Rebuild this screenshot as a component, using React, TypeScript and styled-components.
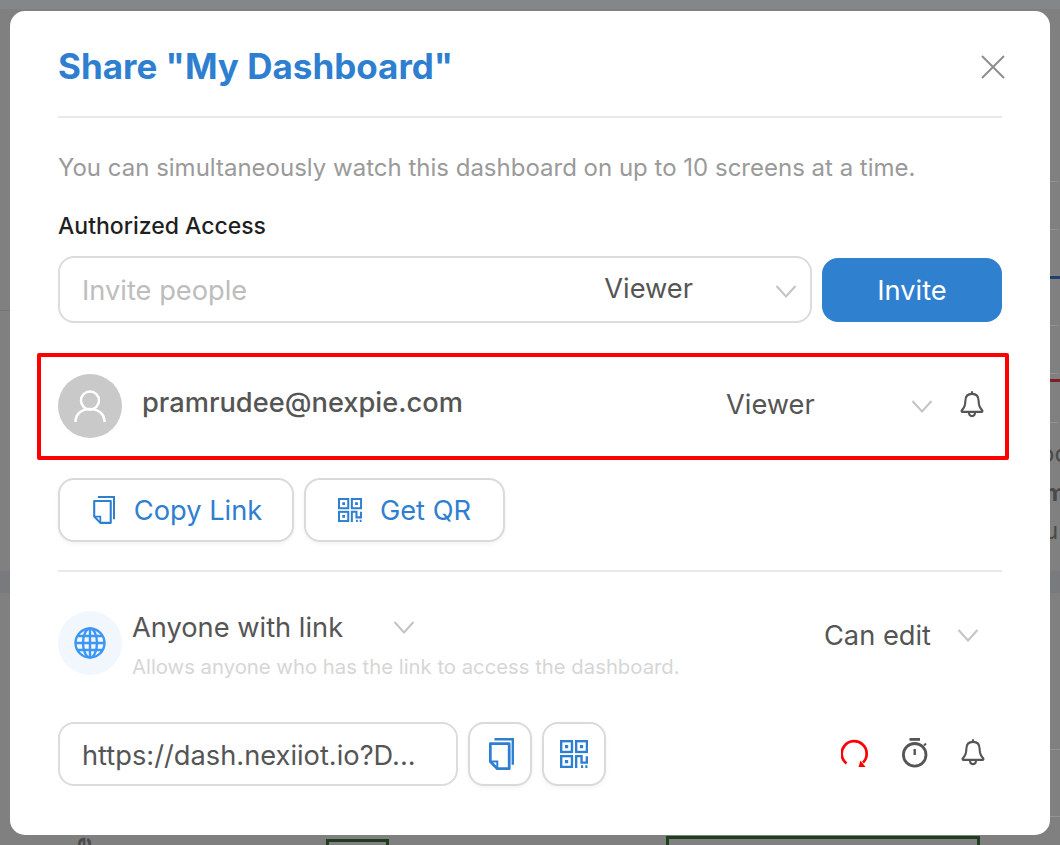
import styled, { createGlobalStyle } from 'styled-components';

const GlobalStyle = createGlobalStyle`
  html, body {
    margin: 0;
    padding: 0;
    height: 845px;
    overflow: hidden;
    background: #808080;
  }
  * {
    box-sizing: border-box;
  }
`;

const Page = styled.div`
  position: relative;
  width: 1060px;
  height: 845px;
  padding: 11px 10px 10px;
  background: #808080;
  overflow: hidden;
  font-family: Inter, "Liberation Sans", sans-serif;
`;

// bits of the dashboard that show around the dimmed modal
const BackMark = styled.div<{ $x: number; $y: number; $w: number; $h: number; $c: string }>`
  position: absolute;
  left: ${(p) => p.$x}px;
  top: ${(p) => p.$y}px;
  width: ${(p) => p.$w}px;
  height: ${(p) => p.$h}px;
  background: ${(p) => p.$c};
`;

const BackText = styled.span<{ $x: number; $y: number; $bold?: boolean }>`
  position: absolute;
  left: ${(p) => p.$x}px;
  top: ${(p) => p.$y}px;
  font-size: 24px;
  line-height: 28px;
  font-weight: ${(p) => (p.$bold ? 700 : 400)};
  color: #4a4a4a;
`;

const RotatedText = styled(BackText)`
  transform: rotate(-90deg);
`;

const GreenBox = styled.div<{ $x: number; $y: number; $w: number }>`
  position: absolute;
  left: ${(p) => p.$x}px;
  top: ${(p) => p.$y}px;
  width: ${(p) => p.$w}px;
  height: 30px;
  border: 3px solid #1f3d1f;
`;

const Modal = styled.div`
  position: relative;
  width: 1040px;
  height: 824px;
  padding: 0 48px;
  background: #fff;
  border-radius: 15px;
`;

const Header = styled.div`
  display: flex;
  align-items: center;
  justify-content: space-between;
  height: 107px;
  padding-top: 5px;
  border-bottom: 2px solid #e9e9e9;
`;

const Title = styled.h1`
  margin: 0;
  font-size: 35px;
  font-weight: 700;
  color: #2f7fd1;
`;

const CloseButton = styled.div`
  display: flex;
  margin-right: -3px;
  margin-top: 2px;
  color: #8e8e8e;
`;

const Hint = styled.p`
  margin: 36px 0 0;
  font-size: 24px;
  line-height: 28px;
  color: #9a9a9a;
`;

const Label = styled.div`
  margin-top: 30px;
  font-size: 23px;
  line-height: 28px;
  font-weight: 500;
  color: #1f1f1f;
`;

const InviteRow = styled.div`
  display: flex;
  gap: 10px;
  align-items: center;
  margin-top: 16px;
`;

const InviteField = styled.div`
  display: flex;
  align-items: center;
  flex: 0 0 754px;
  height: 67px;
  padding: 2px 13px 0 22px;
  border: 2px solid #dcdcdc;
  border-radius: 16px;
`;

const Placeholder = styled.span`
  flex: 1;
  font-size: 27.25px;
  color: #bdbdbd;
`;

const RoleText = styled.span`
  font-size: 27.25px;
  color: #555;
`;

const InviteRole = styled(RoleText)`
  margin: -4px 82px 0 0;
`;

const InviteButton = styled.button`
  flex: 1;
  height: 64px;
  padding: 2px 0 0;
  border: none;
  border-radius: 16px;
  background: #3080d0;
  color: #fff;
  font-family: inherit;
  font-size: 27.25px;
`;

const Caret = styled.svg`
  display: block;
  flex: none;
  width: 22px;
  height: 14px;
  fill: none;
  stroke: #c4c4c4;
  stroke-width: 2;
`;

const MemberRow = styled.div`
  display: flex;
  align-items: center;
  height: 107px;
  margin: 30px -7px 0 -21px;
  padding: 0 21px 2px 17px;
  border: 4px solid #ff0000;
  border-radius: 2px;
`;

const Avatar = styled.div`
  display: flex;
  align-items: center;
  justify-content: center;
  flex: none;
  width: 64px;
  height: 64px;
  border-radius: 50%;
  background: #c9c9c9;
  color: #fff;
`;

const MemberEmail = styled.span`
  width: 584px;
  margin: -7px 0 0 20px;
  font-size: 27.25px;
  font-weight: 500;
  color: #555;
`;

const MemberRole = styled(RoleText)`
  width: 185px;
  margin-top: -3px;
`;

const MemberCaret = styled.div`
  display: flex;
  flex: none;
  width: 49px;
`;

const MemberBell = styled.div`
  display: flex;
  margin-top: -3px;
`;

const LinkButtons = styled.div`
  display: flex;
  gap: 10px;
  margin-top: 18px;
`;

const OutlineButton = styled.button<{ $width: number; $gap: number; $inset?: number }>`
  display: flex;
  align-items: center;
  justify-content: center;
  gap: ${(p) => p.$gap}px;
  width: ${(p) => p.$width}px;
  height: 64px;
  padding: 0 0 0 ${(p) => p.$inset ?? 0}px;
  background: #fff;
  border: 2px solid #dadada;
  border-radius: 16px;
  box-shadow: 0 2px 4px rgba(0, 0, 0, 0.05);
  color: #2f7fd1;
  font-family: inherit;
  font-size: 27.25px;
`;

const Divider = styled.div`
  height: 2px;
  margin-top: 28px;
  background: #e9e9e9;
`;

const PublicRow = styled.div`
  display: flex;
  align-items: flex-start;
  margin-top: 39px;
`;

const GlobeCircle = styled.div`
  display: flex;
  align-items: center;
  justify-content: center;
  flex: none;
  width: 64px;
  height: 64px;
  border-radius: 50%;
  background: #f1f7fd;
`;

const PublicInfo = styled.div`
  flex: 1;
  margin-left: 10px;
`;

const PublicTitle = styled.div`
  display: flex;
  align-items: center;
  gap: 50px;
  height: 32px;
  font-size: 27.25px;
  color: #555;
`;

const PublicNote = styled.div`
  margin-top: 11px;
  font-size: 20.3px;
  line-height: 26px;
  color: #d6d6d6;
`;

const PublicRole = styled.div`
  display: flex;
  align-items: center;
  gap: 26px;
  height: 32px;
  margin: 8px 23px 0 0;
  font-size: 27.25px;
  color: #555;
`;

const UrlRow = styled.div`
  display: flex;
  align-items: center;
  margin-top: 42px;
`;

const UrlField = styled.div`
  display: flex;
  align-items: center;
  flex: none;
  width: 400px;
  height: 64px;
  padding: 2px 22px 0;
  border: 2px solid #dcdcdc;
  border-radius: 16px;
  font-size: 27.25px;
  color: #555;
`;

const SquareButton = styled.button<{ $inset?: number }>`
  display: flex;
  align-items: center;
  justify-content: center;
  flex: none;
  width: 64px;
  height: 64px;
  margin-left: 10px;
  padding: 0 0 0 ${(p) => p.$inset ?? 0}px;
  background: #fff;
  border: 2px solid #dadada;
  border-radius: 16px;
  box-shadow: 0 2px 4px rgba(0, 0, 0, 0.05);
`;

const StatusIcons = styled.div`
  display: flex;
  align-items: center;
  gap: 33px;
  margin: -3px 17px 0 auto;
`;

const CaretIcon = () => (
  <Caret viewBox="0 0 22 14">
    <path d="M1.5 2 11 12.5 20.5 2" />
  </Caret>
);

const BellIcon = () => (
  <svg width="24" height="29" viewBox="0 0 24 30" fill="none" stroke="#555" strokeWidth="2.2" strokeLinejoin="round">
    <path d="M12 4c-4.6 0-6.9 3.2-6.9 7.6 0 4.800-1.300 7-3.600 9.400-.6.700-.2 1.600.6 1.600h19.800c.8 0 1.200-.9.600-1.600-2.300-2.400-3.600-4.600-3.600-9.400C18.900 7.200 16.600 4 12 4Z" />
    <path d="M12 1.200V4M8.800 22.800c0 2.300 1.300 4.200 3.200 4.200s3.200-1.900 3.200-4.200" />
  </svg>
);

const CopyIcon = ({ width = 22, height = 28, weight = 2.4 }: { width?: number; height?: number; weight?: number }) => (
  <svg width={width} height={height} viewBox="0 0 25 32" fill="none" stroke="#2f7fd1" strokeWidth={weight}>
    <path d="M5.500 1.200H24v25.500" />
    <path d="M1.300 23.500V5.700h18.900v25H8.300Z" strokeLinejoin="round" />
    <path d="M1.300 23.500h7v7" strokeWidth="2" />
  </svg>
);

const QrIcon = ({ size = 24 }: { size?: number }) => (
  <svg width={size} height={size} viewBox="0 0 26 26" fill="none" stroke="#2f7fd1" strokeWidth="2.200">
    <rect x="1.100" y="1.100" width="10" height="10" />
    <rect x="15" y="1.100" width="10" height="10" />
    <rect x="1.100" y="15" width="10" height="10" />
    <path d="M4.600 6.100h3M18.500 6.100h3M4.600 20h3" strokeWidth="3" />
    <path d="M15 26V15h5v6h4.900v-6" />
    <path d="M19.500 24.700h2M23.500 24.700h2" strokeWidth="2.400" />
  </svg>
);

const GlobeIcon = () => (
  <svg width="32" height="32" viewBox="0 0 32 32" fill="none" stroke="#3b96f5" strokeWidth="2.400">
    <circle cx="16" cy="16" r="14.500" />
    <ellipse cx="16" cy="16" rx="7" ry="14.500" />
    <path d="M16 1.500v29M1.500 16h29M3.500 9h25M3.500 23h25" />
  </svg>
);

const RefreshIcon = () => (
  <svg width="28" height="28" viewBox="0 0 28 28" fill="none">
    <path d="M5.500 24.500A12.500 12.500 0 1 1 22 23.500" stroke="#ff0000" strokeWidth="2.700" />
    <path d="M17.500 28 24.500 28 19.500 21.500Z" fill="#ff0000" />
  </svg>
);

const TimerIcon = () => (
  <svg width="26" height="30" viewBox="0 0 26 30" fill="none" stroke="#555" strokeWidth="2.800">
    <circle cx="12.700" cy="16.800" r="11.300" />
    <path d="M7.500 1.400h10.500" />
    <path d="M12.700 11v6" strokeWidth="2.400" />
    <path d="M22 7.500l2-2" strokeWidth="2" />
  </svg>
);

export default function App() {
  return (
    <>
      <GlobalStyle />
      <Page>
        <BackMark $x={0} $y={0} $w={1060} $h={9} $c="#848687" />
        <BackMark $x={0} $y={310} $w={10} $h={1} $c="#757575" />
        <BackMark $x={0} $y={571} $w={1060} $h={22} $c="#787a7d" />
        <BackMark $x={1050} $y={181} $w={8} $h={1} $c="#949494" />
        <BackMark $x={1050} $y={229} $w={8} $h={1} $c="#949494" />
        <BackMark $x={1050} $y={276} $w={10} $h={3} $c="#20406f" />
        <BackMark $x={1050} $y={325} $w={8} $h={1} $c="#949494" />
        <BackMark $x={1050} $y={373} $w={8} $h={1} $c="#949494" />
        <BackMark $x={1050} $y={379} $w={10} $h={3} $c="#7f2020" />
        <BackMark $x={1050} $y={422} $w={8} $h={1} $c="#949494" />
        <BackMark $x={1050} $y={749} $w={10} $h={1} $c="#949494" />
        <BackMark $x={1050} $y={816} $w={10} $h={1} $c="#949494" />
        <BackText $x={1040} $y={440}>oc</BackText>
        <BackText $x={1044} $y={479} $bold>m</BackText>
        <BackText $x={1044} $y={517}>u</BackText>
        <RotatedText $x={76} $y={830} $bold>e</RotatedText>
        <GreenBox $x={326} $y={839} $w={63} />
        <GreenBox $x={666} $y={836} $w={314} />
        <Modal>
          <Header>
            <Title>Share &quot;My Dashboard&quot;</Title>
            <CloseButton>
              <svg width="24" height="24" viewBox="0 0 24 24" fill="none" stroke="currentColor" strokeWidth="2">
                <path d="M1 1l22 22M23 1 1 23" />
              </svg>
            </CloseButton>
          </Header>
          <Hint>You can simultaneously watch this dashboard on up to 10 screens at a time.</Hint>
          <Label>Authorized Access</Label>
          <InviteRow>
            <InviteField>
              <Placeholder>Invite people</Placeholder>
              <InviteRole>Viewer</InviteRole>
              <CaretIcon />
            </InviteField>
            <InviteButton>Invite</InviteButton>
          </InviteRow>
          <MemberRow>
            <Avatar>
              <svg width="32" height="32" viewBox="0 0 32 32" fill="none" stroke="currentColor" strokeWidth="2.500">
                <circle cx="16" cy="10.500" r="9" />
                <path d="M1.500 32c0-8 6-13 14.500-13s14.500 5 14.500 13" />
              </svg>
            </Avatar>
            <MemberEmail>pramrudee@nexpie.com</MemberEmail>
            <MemberRole>Viewer</MemberRole>
            <MemberCaret>
              <CaretIcon />
            </MemberCaret>
            <MemberBell>
              <BellIcon />
            </MemberBell>
          </MemberRow>
          <LinkButtons>
            <OutlineButton $width={236} $gap={19} $inset={3}>
              <CopyIcon />
              Copy Link
            </OutlineButton>
            <OutlineButton $width={201} $gap={18}>
              <QrIcon />
              Get QR
            </OutlineButton>
          </LinkButtons>
          <Divider />
          <PublicRow>
            <GlobeCircle>
              <GlobeIcon />
            </GlobeCircle>
            <PublicInfo>
              <PublicTitle>
                Anyone with link
                <CaretIcon />
              </PublicTitle>
              <PublicNote>Allows anyone who has the link to access the dashboard.</PublicNote>
            </PublicInfo>
            <PublicRole>
              Can edit
              <CaretIcon />
            </PublicRole>
          </PublicRow>
          <UrlRow>
            <UrlField>https://dash.nexiiot.io?D...</UrlField>
            <SquareButton $inset={2}>
              <CopyIcon width={25} height={32} weight={2.8} />
            </SquareButton>
            <SquareButton>
              <QrIcon size={28} />
            </SquareButton>
            <StatusIcons>
              <RefreshIcon />
              <TimerIcon />
              <BellIcon />
            </StatusIcons>
          </UrlRow>
        </Modal>
      </Page>
    </>
  );
}
